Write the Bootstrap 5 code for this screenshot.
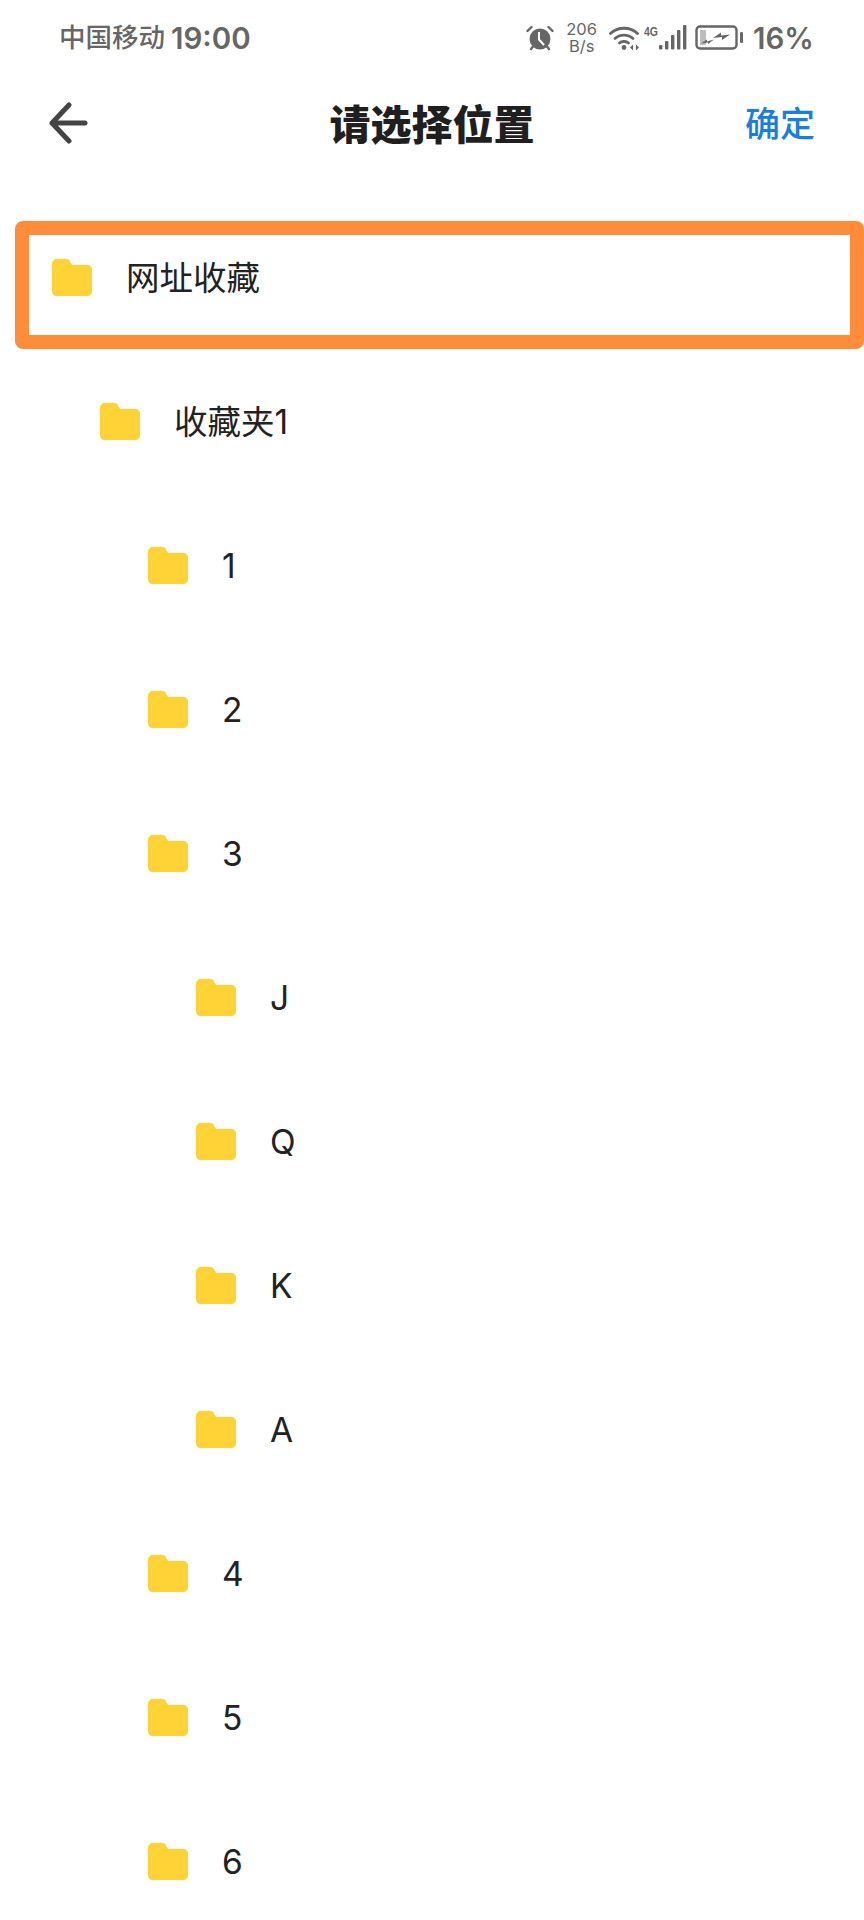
<!DOCTYPE html>
<html lang="zh-CN">
<head>
    <meta charset="UTF-8">
    <meta name="viewport" content="width=device-width, initial-scale=1.0">
    <title>请选择位置</title>
    <link href="https://cdn.jsdelivr.net/npm/bootstrap@5.3.3/dist/css/bootstrap.min.css" rel="stylesheet">
    <style>
        html, body { height: 1920px; overflow: hidden; }
        body { font-family: Inter, "Noto Sans CJK SC", sans-serif; background: #fff; color: #222; }
        .status-bar { height: 76px; padding: 0 50px 0 59px; color: #666; }
        .status-carrier { font-size: 26.5px; font-weight: 500; }
        .status-time { font-size: 29.5px; font-weight: 600; margin-left: 6px; }
        .status-speed { font-size: 16.5px; line-height: 17px; margin: 0 12px; text-align: center; }
        .status-pct { font-size: 29.5px; font-weight: 600; margin-left: 9px; }
        .title-bar { height: 98px; padding: 0 49px; }
        .title-side { flex: 1 1 0; }
        .back-arrow { margin-bottom: 5px; }
        .title-text { font-size: 41px; font-weight: 900; color: #1f1f1f; margin: 0; line-height: 1; }
        .title-ok { font-size: 35px; font-weight: 500; color: #1a7fdc; text-decoration: none; position: relative; top: -1px; }
        .tree-list { margin-top: 31px; }
        .tree-row { height: 144px; font-size: 33.5px; font-weight: 400; line-height: 1; color: #222; }
        .tree-row svg { flex: none; margin-right: 34px; }
        .tree-label { padding-top: 3px; }
        .lvl-0 { padding-left: 52px; }
        .lvl-1 { padding-left: 100px; }
        .lvl-2 { padding-left: 148px; }
        .lvl-3 { padding-left: 196px; }
        .picked-box { top: 16px; left: 15px; right: 0; height: 128px; border: 14px solid #ff8c38; border-radius: 8px; pointer-events: none; }
    </style>
</head>
<body>
    <div class="status-bar d-flex align-items-center justify-content-between">
        <div class="d-flex align-items-center">
            <span class="status-carrier">中国移动</span>
            <span class="status-time">19:00</span>
        </div>
        <div class="d-flex align-items-center">
            <svg width="28" height="26" viewBox="0 0 28 26" fill="#666">
                <path d="M1.5 6 5.5 2M26.5 6 22.5 2" stroke="#666" stroke-width="2.4" stroke-linecap="round" fill="none"/>
                <circle cx="14" cy="14" r="10.5"/>
                <path d="M5 24 7 21.5M23 24 21 21.5" stroke="#666" stroke-width="2.4" stroke-linecap="round"/>
                <path d="M13 7V14.5L18 20" stroke="#fff" stroke-width="2" fill="none"/>
            </svg>
            <div class="status-speed">206<br>B/s</div>
            <svg width="31" height="26" viewBox="0 0 31 26" fill="none" stroke="#666" stroke-width="2.8" stroke-linecap="round">
                <path d="M1.5 8.5C8.5 1.5 21.5 1.5 28.5 8.5"/>
                <path d="M6 13.5C10.5 9 19.5 9 24 13.5"/>
                <path d="M10.5 18C12.5 16 17.5 16 19.5 18"/>
                <circle cx="15" cy="22.5" r="2.4" fill="#666" stroke="none"/>
                <path d="M24 19.5 21 22.5 24 25.5ZM27 19.5 30 22.5 27 25.5Z" fill="#666" stroke="none"/>
            </svg>
            <svg class="ms-1" width="43" height="26" viewBox="0 0 43 26" fill="#666">
                <text x="0" y="11" font-size="12.5" font-weight="700" textLength="14" lengthAdjust="spacingAndGlyphs" font-family="Liberation Sans, sans-serif">4G</text>
                <rect x="15" y="20" width="3.4" height="4.5" rx="1"/>
                <rect x="21" y="16" width="3.4" height="8.5" rx="1"/>
                <rect x="27" y="10" width="3.4" height="14.5" rx="1"/>
                <rect x="33" y="5" width="3.4" height="19.5" rx="1"/>
                <rect x="39" y="0" width="3.4" height="24.5" rx="1"/>
            </svg>
            <svg class="ms-2" width="49" height="26" viewBox="0 0 49 26">
                <rect x="1.5" y="1.5" width="40" height="22" rx="3.5" fill="#fff" stroke="#666" stroke-width="2.4"/>
                <rect x="5" y="5" width="6" height="15" fill="#bdbdbd"/>
                <path d="M18 13 26 7.5V10.5L35 9.5 27 15V12ZM6 18.5 12 14.5V16.5L19 14.5 13 19V17.5Z" fill="#666"/>
                <rect x="45" y="7" width="3" height="11" rx="1.2" fill="#666"/>
            </svg>
            <span class="status-pct">16%</span>
        </div>
    </div>

    <div class="title-bar d-flex align-items-center">
        <div class="title-side d-flex">
            <svg class="back-arrow" width="40" height="42" viewBox="0 0 40 42" fill="none" stroke="#444" stroke-width="5" stroke-linecap="round" stroke-linejoin="round">
                <path d="M20 3 3 21 20 39M3 21H36"/>
            </svg>
        </div>
        <h1 class="title-text">请选择位置</h1>
        <div class="title-side text-end"><a class="title-ok" href="#">确定</a></div>
    </div>

    <div class="tree-list" id="tree"></div>

    <script src="https://cdn.jsdelivr.net/npm/bootstrap@5.3.3/dist/js/bootstrap.bundle.min.js"></script>
    <script>
        const folders = [
            ["网址收藏", 0], ["收藏夹1", 1], ["1", 2], ["2", 2], ["3", 2],
            ["J", 3], ["Q", 3], ["K", 3], ["A", 3],
            ["4", 2], ["5", 2], ["6", 2]
        ];
        const folderIcon = `<svg width="40" height="37" viewBox="0 0 40 37"><path d="M5 0H14C17 0 18 2 20 6H35C38 6 40 8 40 11V32C40 35 38 37 35 37H5C2 37 0 35 0 32V5C0 2 2 0 5 0Z" fill="#ffd236"/></svg>`;
        const tree = document.getElementById("tree");
        folders.forEach((f, i) => {
            const row = document.createElement("div");
            row.className = `tree-row lvl-${f[1]} d-flex align-items-center position-relative`;
            row.innerHTML = folderIcon + `<span class="tree-label">${f[0]}</span>` + (i === 0 ? `<div class="picked-box position-absolute"></div>` : "");
            tree.appendChild(row);
        });
    </script>
</body>
</html>
